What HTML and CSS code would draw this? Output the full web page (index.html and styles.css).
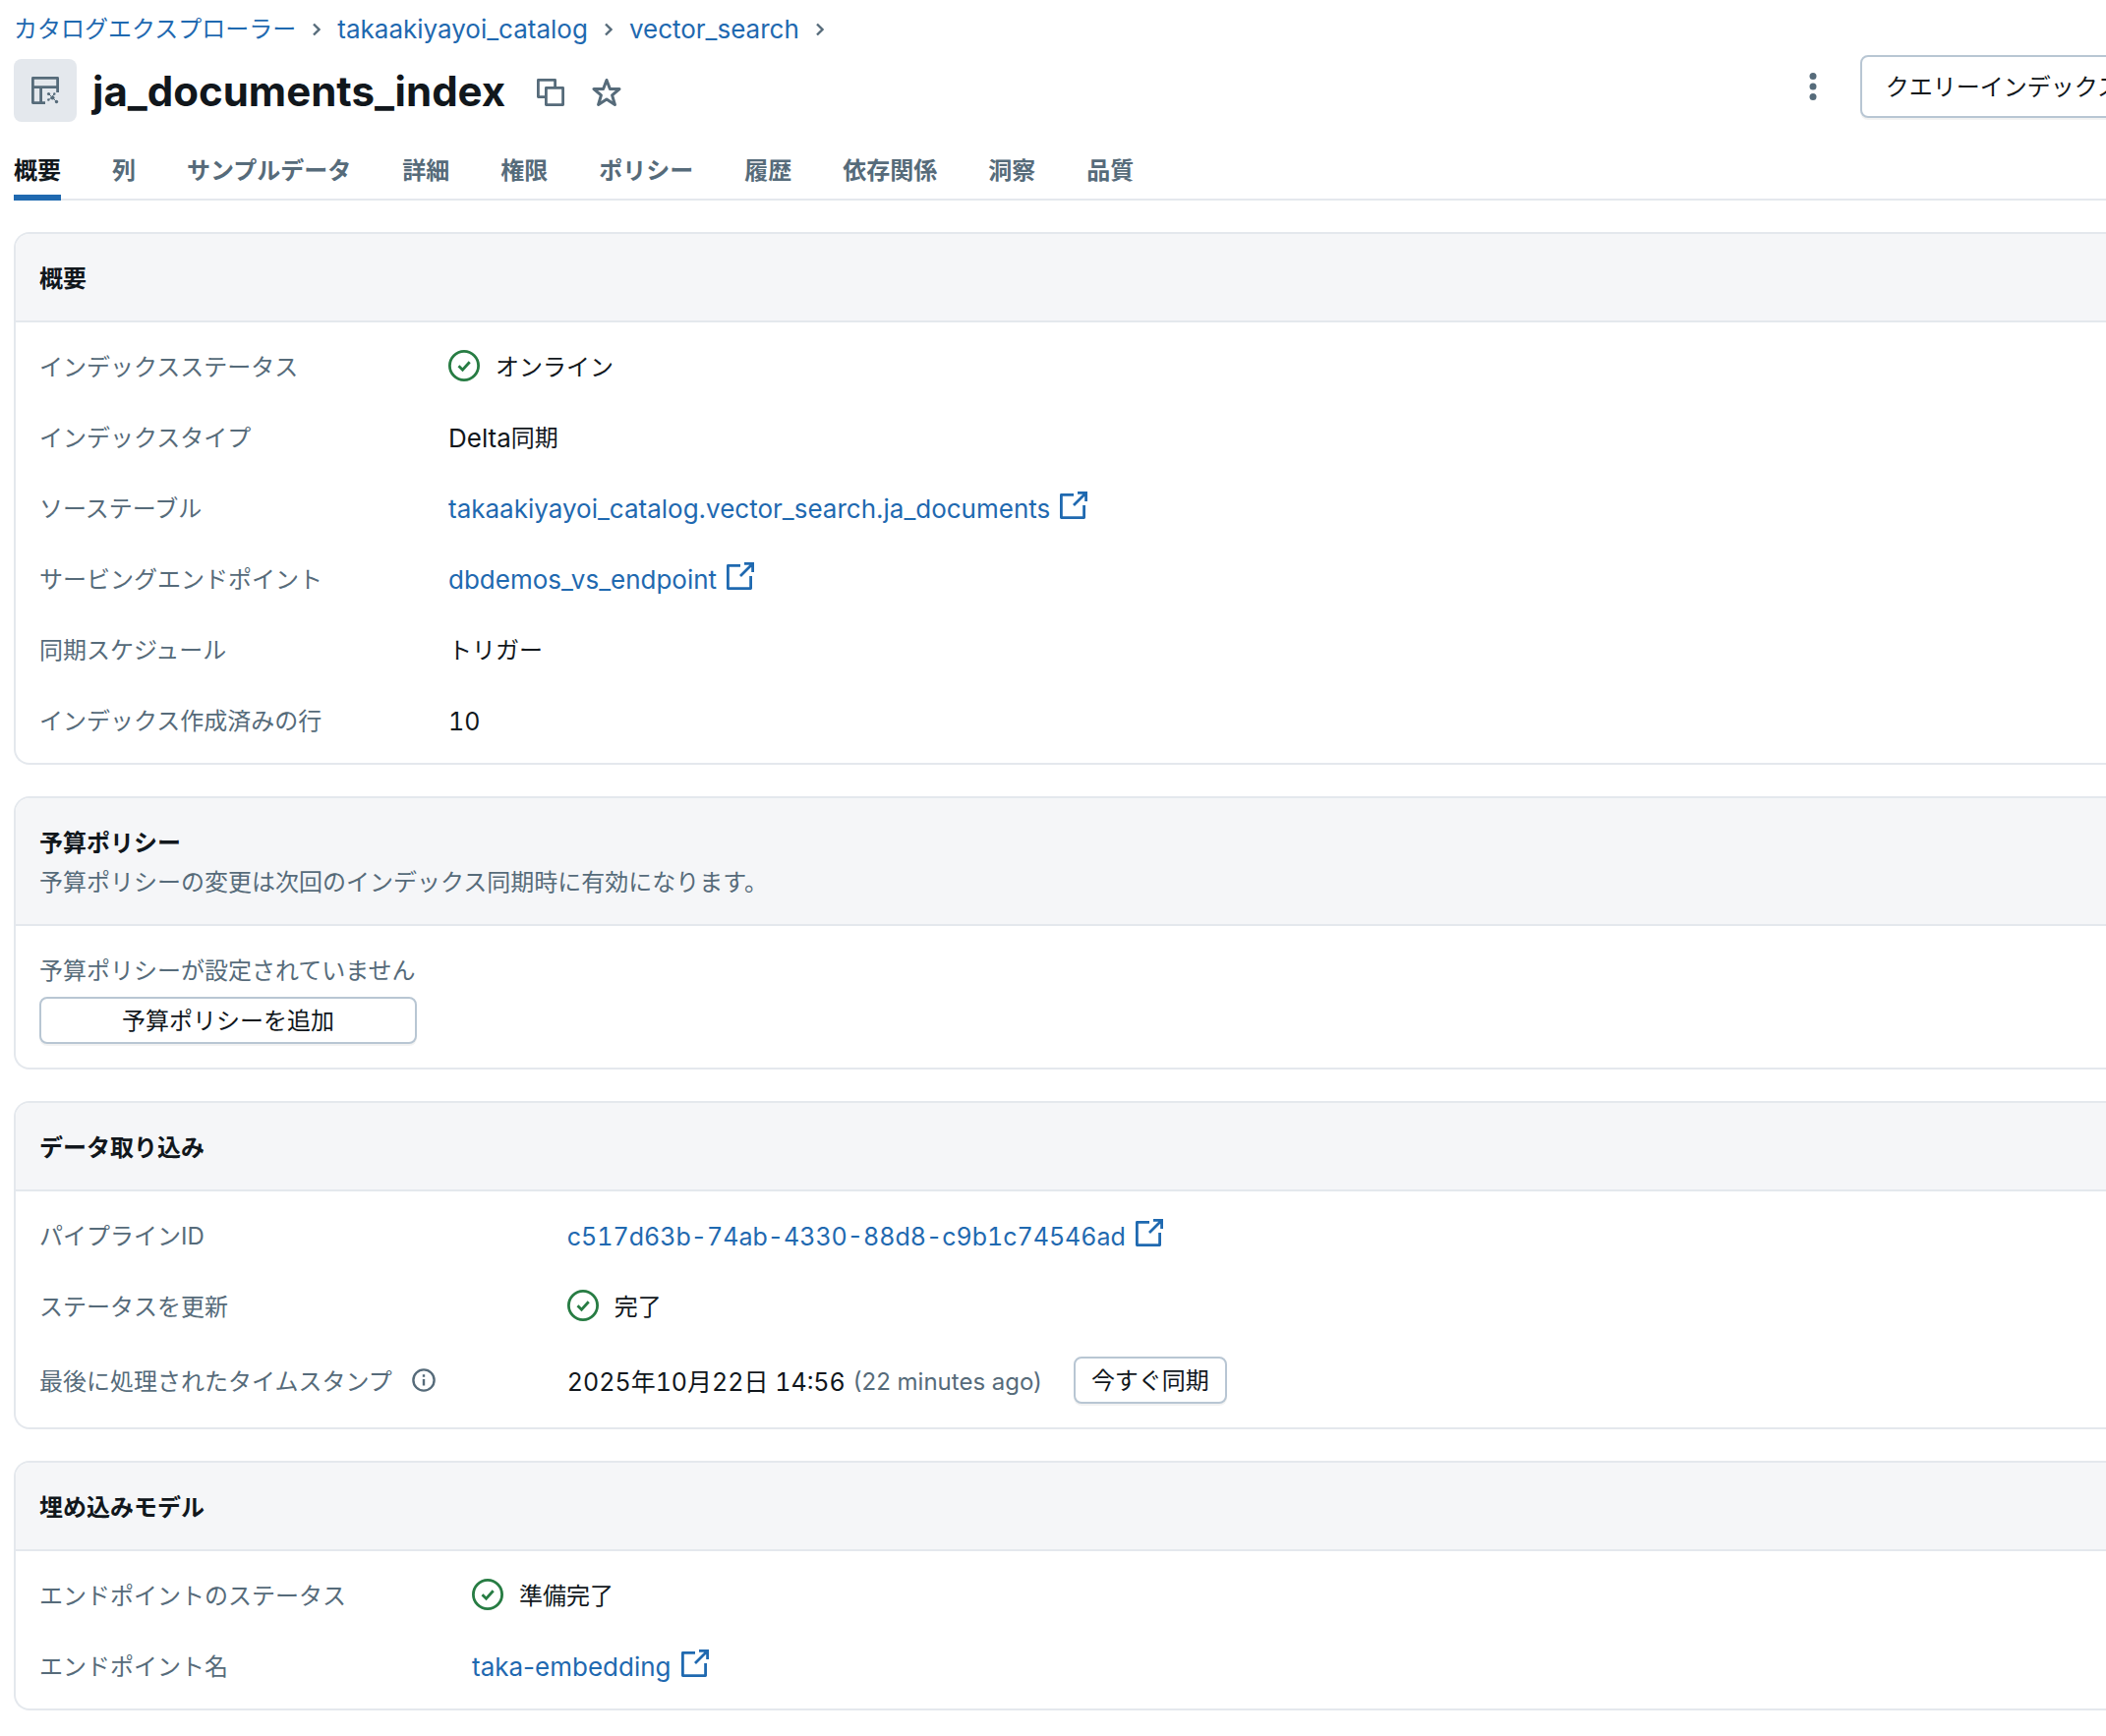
FILE: index.html
```html
<!DOCTYPE html>
<html lang="ja">
<head>
    <meta charset="UTF-8">
    <meta name="viewport" content="width=device-width, initial-scale=1.0">
    <title>ja_documents_index</title>
    <link rel="stylesheet" href="styles.css">
</head>
<body>
    <!-- アイコン定義 -->
    <svg class="sprite" aria-hidden="true">
        <symbol id="icon-check" viewBox="0 0 32 32">
            <circle cx="16" cy="16" r="14.6" fill="none" stroke="currentColor" stroke-width="2.8"/>
            <path d="M10.5 16.3l4 4 7.2-8" fill="none" stroke="currentColor" stroke-width="2.8"/>
        </symbol>
        <symbol id="icon-external" viewBox="0 0 28 28">
            <path d="M14 3.4H1.4v23.2h23.2V14" fill="none" stroke="currentColor" stroke-width="2.8" stroke-linejoin="round"/>
            <path d="M18 1.4h8.6V10M26 2L14 14" fill="none" stroke="currentColor" stroke-width="2.8"/>
        </symbol>
        <symbol id="icon-chevron" viewBox="0 0 8 14">
            <path d="M1 1.5L6.5 7L1 12.5" fill="none" stroke="currentColor" stroke-width="2.4"/>
        </symbol>
    </svg>

    <nav class="breadcrumb">
        <a href="#">カタログエクスプローラー</a>
        <svg class="chevron"><use href="#icon-chevron"/></svg>
        <a href="#" class="latin">takaakiyayoi_catalog</a>
        <svg class="chevron"><use href="#icon-chevron"/></svg>
        <a href="#" class="latin">vector_search</a>
        <svg class="chevron"><use href="#icon-chevron"/></svg>
    </nav>

    <header class="page-header">
        <span class="type-icon">
            <svg viewBox="0 0 28 28" width="28" height="28" fill="none" stroke="currentColor" stroke-width="2.8">
                <path d="M14 26.6H1.4V1.4h25.2V16M1.4 10.6h25.2M9.6 10.6v16" stroke-linejoin="round"/>
                <path d="M17.5 17.5l8 8M23 18l-5 5.5" stroke-width="1"/>
                <g fill="currentColor" stroke="none">
                    <circle cx="17.5" cy="17.5" r="1.6"/>
                    <circle cx="23.3" cy="17.5" r="1.2"/>
                    <circle cx="21.5" cy="21.5" r="2.1"/>
                    <circle cx="17.3" cy="23.5" r="1.2"/>
                    <circle cx="25.5" cy="25.5" r="1.7"/>
                </g>
            </svg>
        </span>
        <h1>ja_documents_index</h1>
        <div class="title-actions">
            <button class="icon-btn" aria-label="コピー">
                <svg viewBox="0 0 28 28" width="28" height="28" fill="none" stroke="currentColor" stroke-width="2.8" stroke-linejoin="round">
                    <path d="M9 18.6H1.4V1.4h17.2V9"/>
                    <path d="M9.4 9.4h17.2v17.2H9.4z"/>
                </svg>
            </button>
            <button class="icon-btn" aria-label="お気に入り">
                <svg viewBox="0 0 30 30" width="30" height="30" fill="none" stroke="currentColor" stroke-width="3" stroke-linejoin="round">
                    <path d="M15 2.5l3.4 9H28l-7.4 6.3 2.8 9.7L15 22l-8.4 5.5 2.8-9.7L2 11.5h9.6z"/>
                </svg>
            </button>
        </div>
        <div class="actions">
            <button class="icon-btn" aria-label="その他">
                <svg viewBox="0 0 8 28" width="8" height="28" fill="currentColor">
                    <circle cx="4" cy="3.5" r="3.5"/>
                    <circle cx="4" cy="14" r="3.5"/>
                    <circle cx="4" cy="24.5" r="3.5"/>
                </svg>
            </button>
            <button class="btn btn-large">クエリーインデックス</button>
        </div>
    </header>

    <nav class="tabs">
        <a href="#" class="active">概要</a>
        <a href="#">列</a>
        <a href="#">サンプルデータ</a>
        <a href="#">詳細</a>
        <a href="#">権限</a>
        <a href="#">ポリシー</a>
        <a href="#">履歴</a>
        <a href="#">依存関係</a>
        <a href="#">洞察</a>
        <a href="#">品質</a>
    </nav>

    <main class="cards">
        <!-- 概要 -->
        <section class="card">
            <div class="card-header"><h2>概要</h2></div>
            <dl class="card-body fields">
                <dt>インデックスステータス</dt>
                <dd><svg class="check"><use href="#icon-check"/></svg>オンライン</dd>
                <dt>インデックスタイプ</dt>
                <dd><span class="latin">Delta</span>同期</dd>
                <dt>ソーステーブル</dt>
                <dd><a href="#" class="latin">takaakiyayoi_catalog.vector_search.ja_documents<svg class="external"><use href="#icon-external"/></svg></a></dd>
                <dt>サービングエンドポイント</dt>
                <dd><a href="#" class="latin">dbdemos_vs_endpoint<svg class="external"><use href="#icon-external"/></svg></a></dd>
                <dt>同期スケジュール</dt>
                <dd>トリガー</dd>
                <dt>インデックス作成済みの行</dt>
                <dd class="digits">10</dd>
            </dl>
        </section>

        <!-- 予算ポリシー -->
        <section class="card">
            <div class="card-header">
                <h2>予算ポリシー</h2>
                <p>予算ポリシーの変更は次回のインデックス同期時に有効になります。</p>
            </div>
            <div class="card-body policy">
                <p>予算ポリシーが設定されていません</p>
                <button class="btn">予算ポリシーを追加</button>
            </div>
        </section>

        <!-- データ取り込み -->
        <section class="card">
            <div class="card-header"><h2>データ取り込み</h2></div>
            <dl class="card-body fields">
                <dt>パイプラインID</dt>
                <dd><a href="#" class="digits">c517d63b-74ab-4330-88d8-c9b1c74546ad<svg class="external"><use href="#icon-external"/></svg></a></dd>
                <dt>ステータスを更新</dt>
                <dd><svg class="check"><use href="#icon-check"/></svg>完了</dd>
                <dt>最後に処理されたタイムスタンプ
                    <svg class="info" viewBox="0 0 24 24" fill="none" stroke="currentColor" stroke-width="2.4">
                        <circle cx="12" cy="12" r="10.6"/>
                        <path d="M12 11v6.5M12 6.2v2.6"/>
                    </svg>
                </dt>
                <dd><span class="digits">2025年10月22日 14:56</span><span class="ago">(22 minutes ago)</span><button class="btn">今すぐ同期</button></dd>
            </dl>
        </section>

        <!-- 埋め込みモデル -->
        <section class="card">
            <div class="card-header"><h2>埋め込みモデル</h2></div>
            <dl class="card-body fields">
                <dt>エンドポイントのステータス</dt>
                <dd><svg class="check"><use href="#icon-check"/></svg>準備完了</dd>
                <dt>エンドポイント名</dt>
                <dd><a href="#" class="latin">taka-embedding<svg class="external"><use href="#icon-external"/></svg></a></dd>
            </dl>
        </section>
    </main>
</body>
</html>
```
FILE: styles.css
```css
* {
    box-sizing: border-box;
}

body {
    --text: #11171c;
    --muted: #566b7a;
    --link: #1f69b0;
    --border: #e4e8ed;
    font-family: Inter, "Noto Sans CJK JP", sans-serif;
    font-size: 24px;
    line-height: 40px;
    color: var(--text);
    background: #fff;
    margin: 0;
    padding: 10px 0 24px 14px;
    overflow-x: hidden;
}

h1, h2, p, dl, dd {
    margin: 0;
}

a {
    color: var(--link);
    text-decoration: none;
}

a:hover {
    text-decoration: underline;
}

svg {
    flex-shrink: 0;
}

.sprite {
    display: none;
}

/* 英数字は和文より一回り大きく */
.latin {
    font-size: 26px;
}

.digits {
    font-size: 25px;
    font-variant-numeric: tabular-nums;
}

.breadcrumb {
    display: flex;
    align-items: center;
    gap: 17px;
}

.chevron {
    width: 8px;
    height: 14px;
    color: var(--muted);
}

/* ヘッダー */
.page-header {
    display: flex;
    align-items: center;
    gap: 16px;
    margin-top: 6px;
    height: 72px;
}

.type-icon {
    display: flex;
    align-items: center;
    justify-content: center;
    width: 64px;
    height: 64px;
    border-radius: 8px;
    background: var(--border);
    color: var(--muted);
}

h1 {
    font-size: 42px;
    font-weight: 700;
    line-height: 56px;
    padding-top: 2px;
}

.icon-btn {
    display: flex;
    padding: 8px;
    border: none;
    background: none;
    color: var(--muted);
    cursor: pointer;
}

.title-actions {
    display: flex;
    align-items: center;
    gap: 12px;
    padding: 4px 0 0 8px;
}

.actions {
    display: flex;
    align-items: center;
    gap: 36px;
    margin-left: auto;
    margin-right: -41px;
    padding-bottom: 8px;
}

.btn {
    height: 48px;
    padding: 2px 16px 0;
    border: 2px solid #b8c6d3;
    border-radius: 8px;
    background: #fff;
    box-shadow: 0 2px 0 rgba(0, 0, 0, 0.05);
    color: var(--text);
    font: inherit;
    line-height: 40px;
    cursor: pointer;
}

.btn-large {
    height: 64px;
    padding: 2px 24px 0;
}

/* タブ */
.tabs {
    display: flex;
    gap: 52px;
    height: 56px;
    margin-top: 20px;
    border-bottom: 2px solid var(--border);
    font-weight: 600;
}

.tabs a {
    height: 56px;
    padding-top: 6px;
    color: var(--muted);
}

.tabs .active {
    color: var(--text);
    border-bottom: 6px solid var(--link);
}

/* カード */
.cards {
    display: flex;
    flex-direction: column;
    gap: 32px;
    margin-top: 32px;
}

.card {
    border: 2px solid var(--border);
    border-right: none;
    border-radius: 16px 0 0 16px;
    overflow: hidden;
}

.card-header, .card-body {
    padding: 26px 24px 22px;
}

.card-header {
    background: #f5f6f8;
    border-bottom: 2px solid var(--border);
}

.card-header p, .policy p, .fields dt, .ago {
    color: var(--muted);
}

h2 {
    font-size: 24px;
    font-weight: 600;
    line-height: 40px;
}

.fields {
    display: grid;
    grid-template-columns: max-content 1fr;
    column-gap: 128px;
    row-gap: 32px;
}

.fields dt, .fields dd, .fields a {
    display: flex;
    align-items: center;
}

.fields .btn {
    margin: -2px 0 2px;
}

.policy {
    display: flex;
    flex-direction: column;
    align-items: flex-start;
    gap: 6px;
    padding-bottom: 24px;
}

.policy .btn {
    width: 384px;
}

.check {
    width: 32px;
    height: 32px;
    margin: 0 16px 4px 0;
    color: #277c43;
}

.external {
    width: 28px;
    height: 28px;
    margin: 0 0 8px 10px;
}

.info {
    width: 24px;
    height: 24px;
    margin: 0 6px 4px 20px;
}

.ago {
    margin-left: 8px;
    margin-right: 32px;
}
```
